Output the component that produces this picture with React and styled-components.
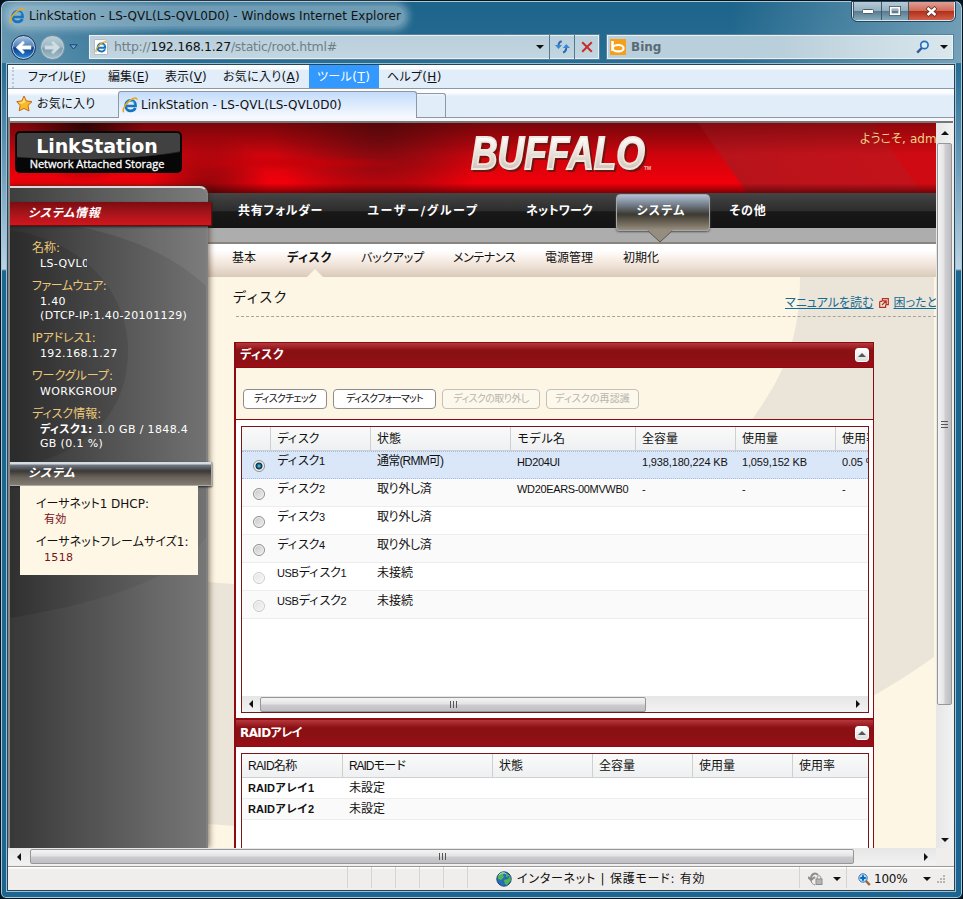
import styled, { createGlobalStyle, css } from "styled-components";

const uiFont = `"DejaVu Sans", "Noto Sans CJK JP", sans-serif`;
const gridFont = `"Liberation Sans", "Noto Sans CJK JP", sans-serif`;

const GlobalStyle = createGlobalStyle`
  * {
    box-sizing: border-box;
  }

  body {
    margin: 0;
    background: #06121e;
    overflow: hidden;
    font-family: ${uiFont};
    font-feature-settings: "palt";
    font-size: 12px;
    line-height: 16px;
    color: #111;
    white-space: nowrap;
  }

  svg {
    display: block;
    flex: none;
  }
`;

const Label = styled.span`
  letter-spacing: ${({ $ls = 0 }) => $ls}px;
`;

/* window frame */

const Window = styled.div`
  width: 963px;
  height: 899px;
  display: flex;
  flex-direction: column;
  padding: 2px 7px 7px 6px;
  border: 1px solid #07131f;
  border-radius: 8px 8px 6px 6px;
  box-shadow: inset 0 0 0 1px #a9c8d8;
  background:
    linear-gradient(
        to right,
        rgba(255, 255, 255, 0.3),
        transparent 18%,
        transparent 76%,
        rgba(255, 255, 255, 0.36)
      )
      0 0 / 100% 62px no-repeat,
    linear-gradient(#1d648a 0, #2a6f95 70px, #6f9fbd 170px, #bdd3e2 268px, #1b678f 270px, #1d6590 100%);
`;

const TitleBar = styled.div`
  display: flex;
  align-items: center;
  height: 29px;
  flex: none;
`;

const TitleText = styled.div`
  display: flex;
  align-items: center;
  gap: 4px;
  height: 20px;
  margin-left: 1px;
  padding: 0 4px 0 1px;
  margin-top: -4px;
  border-radius: 10px;
  background: rgba(190, 212, 224, 0.5);
  box-shadow: 0 0 7px 4px rgba(190, 212, 224, 0.5);
`;

const WindowButtons = styled.div`
  display: flex;
  align-self: flex-start;
  height: 19px;
  margin: -1px 0 0 auto;
  border: 1px solid #dbe7ee;
  border-top: 0;
  border-radius: 0 0 5px 5px;
  overflow: hidden;
  outline: 1px solid #24455c;
`;

const WindowButton = styled.div`
  width: ${({ $w }) => $w}px;
  display: flex;
  align-items: center;
  justify-content: center;
  border-left: 1px solid #3a596b;
  background: ${({ $close }) =>
    $close
      ? "linear-gradient(#e0a093, #cf6b5a 48%, #b22c18 50%, #d0604a)"
      : "linear-gradient(#b7cbd7, #93afbf 48%, #55798e 50%, #86a8b9)"};
`;

const NavBar = styled.div`
  display: flex;
  align-items: center;
  height: 32px;
  flex: none;
  padding: 0 1px 2px 4px;
`;

const RoundButton = styled.div`
  width: 25px;
  height: 25px;
  margin-right: 4px;
  display: flex;
  align-items: center;
  justify-content: center;
  border-radius: 50%;
  border: 1px solid ${({ $active }) => ($active ? "#16345e" : "#7694a3")};
  box-shadow: inset 0 0 0 1px #b9cedb;
  background: ${({ $active }) =>
    $active
      ? "linear-gradient(#a9c5e2, #4f80bd 45%, #0d3c8a 52%, #2a90e0)"
      : "linear-gradient(#bccfd7, #9db7c3 48%, #7c9dac 52%, #a5bfca)"};
`;

const Field = styled.div`
  display: flex;
  align-items: center;
  height: 26px;
  border: 1px solid #56839c;
  box-shadow: inset 0 0 0 1px #e9f1f5;
  background: linear-gradient(#b9cfdb, #c3d6e1);
  ${({ $w }) => css`
    width: ${$w}px;
  `}
`;

const AddressField = styled(Field)`
  margin-left: 10px;
  padding-left: 5px;
  font-size: 12.5px;
  color: #6f7f88;

  b {
    font-weight: normal;
    color: #111;
  }
`;

const FileIcon = styled.div`
  width: 14px;
  height: 16px;
  margin-right: 6px;
  display: flex;
  align-items: center;
  border: 1px solid #b5bdc4;
  border-radius: 1px 4px 1px 1px;
  background: #fff;
`;

const SearchField = styled(Field)`
  margin-left: 6px;
  padding: 0 5px 0 3px;
  gap: 5px;
  color: #596a74;
  font-weight: bold;
  background: linear-gradient(to right, #b9cfdb 50%, #dae7ed);
`;

const FieldButton = styled.div`
  width: 25px;
  height: 24px;
  display: flex;
  align-items: center;
  justify-content: center;
  border-left: 1px solid #56788c;
`;

const Arrow = styled.span`
  width: 0;
  height: 0;
  flex: none;
  border: ${({ $size = 4 }) => $size}px solid transparent;
  ${({ $dir = "down", $size = 4, $color = "#111" }) => {
    const side = { down: "top", up: "bottom", left: "right", right: "left" }[$dir];
    const opposite = { down: "bottom", up: "top", left: "left", right: "right" }[$dir];
    return `border-${side}-color: ${$color}; border-${opposite}-width: 0; border-${side}-width: ${$size}px;`;
  }}
`;

const Push = styled.span`
  flex: 1;
`;

const Client = styled.div`
  flex: 1;
  min-height: 0;
  display: flex;
  flex-direction: column;
  border: 1px solid #24445a;
  outline: 1px solid #9dc0d2;
  background: #f0eeec;
`;

const MenuBar = styled.div`
  display: flex;
  height: 24px;
  flex: none;
  padding-left: 4px;
  border-bottom: 1px solid #8f97a3;
  background: linear-gradient(#fbfdff 0 4px, #e1edf9 5px, #e1edf9);

  &::before {
    content: "";
    width: 6px;
    margin-top: 2px;
    border-left: 2px dotted #c0c8d2;
  }
`;

const MenuItem = styled.div`
  width: ${({ $w }) => $w}px;
  padding-left: 8px;
  line-height: 24px;
  letter-spacing: ${({ $ls = 0 }) => $ls}px;
  color: ${({ $active }) => ($active ? "#fff" : "#111")};
  background: ${({ $active }) => ($active ? "#3399ff" : "none")};
`;

const TabBar = styled.div`
  display: flex;
  align-items: flex-end;
  height: 29px;
  flex: none;
  border-bottom: 1px solid #8f97a3;
  background: linear-gradient(#fbfdff 0 4px, #e1edf9 7px, #e1edf9);
`;

const Favorites = styled.div`
  width: 110px;
  height: 27px;
  display: flex;
  align-items: center;
  gap: 4px;
  padding-left: 8px;
`;

const BrowserTab = styled.div`
  width: 299px;
  height: 27px;
  display: flex;
  align-items: center;
  gap: 3px;
  padding-left: 3px;
  margin-bottom: -1px;
  border: 1px solid #8f97a3;
  border-bottom: 0;
  border-radius: 3px 3px 0 0;
  background: linear-gradient(#c3dcfb, #f7faff);
`;

const NewTab = styled.div`
  width: 29px;
  height: 24px;
  border: 1px solid #8f97a3;
  border-bottom: 0;
  border-left: 0;
  border-radius: 0 3px 0 0;
`;

const Viewport = styled.div`
  display: flex;
  height: 730px;
  flex: none;
  margin: 0 1px 0 0;
  padding-top: 5px;
  border-left: 2px solid #888;
  background: linear-gradient(#f4f8fc 0 3px, #777 3px 5px, #f0f0f0 5px);
`;

const BottomScroll = styled.div`
  width: 928px;
  flex: none;
`;

/* scroll bars */

const Grip = styled.span`
  width: 7px;
  height: 7px;
  background: repeating-linear-gradient(
    ${({ $vertical }) => ($vertical ? "180deg" : "90deg")},
    #555 0 1px,
    transparent 1px 3px
  );
`;

const Scroll = styled.div`
  display: flex;
  flex: none;
  align-items: center;
  background: ${({ $vertical }) =>
    $vertical ? "linear-gradient(90deg, #e6e6e6, #f2f2f2)" : "linear-gradient(#e6e6e6, #f2f2f2)"};
  flex-direction: ${({ $vertical }) => ($vertical ? "column" : "row")};
  ${({ $vertical, $thick }) => ($vertical ? `width: ${$thick}px;` : `height: ${$thick}px;`)}
`;

const ScrollEnd = styled.span`
  display: flex;
  align-items: center;
  justify-content: center;
  width: ${({ $w }) => $w}px;
  height: ${({ $h }) => $h}px;
`;

const Thumb = styled.span`
  display: flex;
  align-items: center;
  justify-content: center;
  border: 1px solid #979797;
  border-radius: 2px;
  ${({ $vertical, $length }) =>
    $vertical
      ? `width: 15px; height: ${$length}px; background: linear-gradient(90deg, #f4f4f4, #e4e4e6 45%, #cfcfd3 55%, #bdbdc2);`
      : `height: 15px; width: ${$length}px; background: linear-gradient(#f4f4f4, #e4e4e6 45%, #cbcbcf 55%, #c0c0c4);`}
`;

/* web page */

const Page = styled.div`
  width: 926px;
  height: 725px;
  flex: none;
  display: flex;
  flex-direction: column;
  overflow: hidden;
`;

const Banner = styled.header`
  height: 70px;
  flex: none;
  display: flex;
  align-items: flex-start;
  padding: 8px 0 0 5px;
  background:
    linear-gradient(rgba(50, 0, 0, 0.4), transparent 45%, transparent 86%, rgba(50, 0, 0, 0.6)),
    radial-gradient(ellipse at 285px 40px, rgba(200, 0, 8, 0.9), transparent 120px),
    radial-gradient(circle at 370px 0, #6d0b10 0, transparent 110px),
    radial-gradient(circle at 75px 0, #300305, transparent 60px),
    radial-gradient(circle at 200px 70px, rgba(110, 8, 12, 0.8), transparent 60px),
    linear-gradient(55deg, transparent 75.5%, #b8131b 75.7%, #c4121a 93.4%, #d00a12 93.6%),
    linear-gradient(#a80910, #f0000a 85%);
`;

const ProductBadge = styled.div`
  width: 167px;
  height: 42px;
  padding-top: 3px;
  border: 2px solid #090909;
  border-radius: 5px;
  text-align: center;
  color: #fff;
  background: radial-gradient(ellipse 150px 27px at 60px 0, #414141 95%, #070707 100%);
`;

const BadgeName = styled.div`
  margin-left: -3px;
  font: bold 19px/21px "DejaVu Sans", sans-serif;
  letter-spacing: -0.1px;
`;

const BadgeNote = styled.div`
  margin-left: -3px;
  font: 11px/13px "Open Sans", "Noto Sans", sans-serif;
  -webkit-text-stroke: 0.3px #fff;
`;

const Welcome = styled.div`
  margin-left: auto;
  width: 76px;
  overflow: hidden;
  color: #f3d389;
  letter-spacing: 0.1px;
`;

const Columns = styled.div`
  display: flex;
  flex: 1;
`;

const Sidebar = styled.aside`
  width: 198px;
  height: 662px;
  margin-top: -7px;
  padding-top: 14px;
  position: relative;
  z-index: 1;
  flex: none;
  border-top: 2px solid #d9d9d9;
  border-right: 2px solid #818181;
  border-radius: 0 8px 0 0;
  color: #fff;
  background: linear-gradient(90deg, #303030, #484848 35%, #727272);
  box-shadow: 1px 0 6px rgba(60, 40, 20, 0.7);
`;

const SidebarArt = styled.svg`
  position: absolute;
  top: 0;
  left: 0;
  z-index: -1;
`;

const SideHeading = styled.h2`
  width: 202px;
  height: 24px;
  margin: 0;
  padding-left: 18px;
  font-size: 12px;
  font-style: italic;
  line-height: 23px;
  color: #fff;
  letter-spacing: ${({ $ls = 0 }) => $ls}px;
  box-shadow: 0 1px 2px #222;
  background: ${({ $dark }) =>
    $dark
      ? "linear-gradient(#d7dce2 0 2px, #717a86 3px, #3b3936 9px, #67615a 15px, #847c70)"
      : "linear-gradient(#7c0c10, #a3141a 45%, #d1161e)"};
  border: ${({ $dark }) => ($dark ? "solid #aaa" : "solid #6b0b0e")};
  border-width: 0 1px 1px 0;
`;

const InfoList = styled.dl`
  height: 236px;
  margin: 0;
  padding: 14px 0 0 22px;
`;

const InfoGroup = styled.div`
  margin-bottom: 7px;

  dt {
    color: ${({ $light }) => ($light ? "#111" : "#ecc878")};
    line-height: 17px;
  }

  dd {
    margin-left: 8px;
    font-size: 11px;
    line-height: 14px;
    letter-spacing: 0.35px;
    color: ${({ $light }) => ($light ? "#7d1118" : "#fff")};
  }
`;

const ClippedValue = styled.div`
  width: 47px;
  overflow: hidden;
`;

const StatusCard = styled.dl`
  width: 178px;
  height: 89px;
  margin: 0 0 0 10px;
  padding: 10px 0 0 16px;
  background: #fef7e6;
`;

const Main = styled.main`
  flex: 1;
  position: relative;
  min-width: 0;
  background: #fef6e5;
  isolation: isolate;
`;

const PageArt = styled.svg`
  position: absolute;
  top: 84px;
  left: 0;
  z-index: -1;
`;

const PrimaryNav = styled.nav`
  display: flex;
  height: 35px;
  padding-left: 10px;
  background: linear-gradient(#454545, #2d2d2d 50%, #181818 54%, #141414);
  color: #fff;
  font-weight: bold;
`;

const PrimaryItem = styled.div`
  width: ${({ $w }) => $w}px;
  line-height: 37px;
  text-align: center;
  letter-spacing: ${({ $ls = 0 }) => $ls}px;
  ${({ $active }) =>
    $active &&
    css`
      position: relative;
      height: 37px;
      margin-top: 1px;
      padding-right: 4px;
      border: 1px solid #a5a8a8;
      border-radius: 4px;
      line-height: 33px;
      background: linear-gradient(#afc0d6, #707984 30%, #3c3a32 55%, #645c50 75%, #978e80);
      box-shadow: 0 1px 2px #555;
    `}
`;

const NavPointer = styled.svg`
  position: absolute;
  left: 30px;
  top: 35px;
  z-index: 1;
`;

const GrayStrip = styled.div`
  height: 16px;
  border-bottom: 2px solid #88847f;
  background: #adadad;
`;

const SubNav = styled.nav`
  display: flex;
  height: 33px;
  padding-left: 24px;
  line-height: 29px;
  background: linear-gradient(#fff 20%, #f5e9df 55%, #d9cbbb);
`;

const SubItem = styled.div`
  width: ${({ $w }) => $w}px;
  letter-spacing: ${({ $ls = 0 }) => $ls}px;
  font-weight: ${({ $active }) => ($active ? "bold" : "normal")};
`;

const SubPointer = styled(Arrow)`
  position: absolute;
  left: 98px;
  top: 76px;
`;

const TitleRow = styled.div`
  display: flex;
  justify-content: space-between;
  width: 700px;
  height: 40px;
  margin-left: 28px;
  border-bottom: 1px dashed #aaa39a;
`;

const PageTitle = styled.h1`
  margin: 11px 0 0 -3px;
  font-size: 14px;
  font-weight: normal;
  line-height: 18px;
  letter-spacing: 1.7px;
`;

const HelpLinks = styled.div`
  display: flex;
  align-items: center;
  gap: 5px;
  width: 151px;
  height: 18px;
  margin-top: 17px;
  overflow: hidden;
  color: #176b93;

  span {
    text-decoration: underline;
  }
`;

const Panels = styled.div`
  width: 640px;
  margin: 25px 0 0 26px;
  border: solid #8d0a10;
  border-width: 0 1px 0 2px;
`;

const PanelHeader = styled.div`
  display: flex;
  align-items: center;
  justify-content: space-between;
  height: ${({ $h }) => $h}px;
  padding: 0 4px;
  border: solid #8d0a10;
  border-width: ${({ $edge = 1 }) => $edge}px 0 1px;
  color: #fff;
  font-weight: bold;
  background: linear-gradient(#b5383d, #8b1014 30%, #8a1014 60%, #980f16);
`;

const CollapseButton = styled.div`
  width: 14px;
  height: 14px;
  display: flex;
  align-items: center;
  justify-content: center;
  border: 1px solid #fff;
  border-radius: 3px;
  background: linear-gradient(#fff, #dcdcdc);
`;

const Toolbar = styled.div`
  display: flex;
  gap: 6px;
  height: 52px;
  padding: 21px 0 0 7px;
  border-bottom: 1px solid #8d0a10;
`;

const ToolButton = styled.button`
  width: ${({ $w }) => $w}px;
  height: 20px;
  padding: 0;
  border: 1px solid #8c8c8c;
  border-radius: 4px;
  background: #fff;
  font: 10px/16px ${uiFont};
  font-feature-settings: "palt";
  letter-spacing: ${({ $ls = 0 }) => $ls}px;
  white-space: nowrap;
  color: #111;

  &:disabled {
    color: #b9b5aa;
    border-color: #c5c1b7;
    background: #fdf8ec;
  }
`;

const PanelBody = styled.div`
  height: ${({ $h }) => $h}px;
  padding: 6px 4px 0 5px;
  background: #fff;
`;

const GridFrame = styled.div`
  height: ${({ $h }) => $h}px;
  display: flex;
  flex-direction: column;
  border: 1px solid #78161a;
  overflow: hidden;
  font: 11px/16px ${gridFont};
`;

const GridRow = styled.div`
  display: grid;
  grid-template-columns: ${({ $cols }) => $cols};
  height: ${({ $h }) => $h}px;
  flex: none;
  border-bottom: 1px solid #ededed;
  background: ${({ $alt }) => ($alt ? "#fafafa" : "#fff")};
  ${({ $selected }) =>
    $selected &&
    css`
      background: #dae7f9;
      border-top: 1px dotted #a3bae9;
      border-bottom: 1px dotted #a3bae9;
    `}
`;

const GridHead = styled(GridRow)`
  background: linear-gradient(#fafafa, #eef0f1);
  border-bottom: 1px solid #d0d0d0;
`;

const HeadCell = styled.div`
  padding-left: 6px;
  border-right: 1px solid #cfcfcf;
  font-size: 12px;
  line-height: 24px;
  letter-spacing: ${({ $ls = 0 }) => $ls}px;
  overflow: hidden;
`;

const Cell = styled.div`
  padding: ${({ $top = 2 }) => $top}px 0 0 6px;
  overflow: hidden;
  letter-spacing: ${({ $ls = 0 }) => $ls}px;
  font-weight: ${({ $bold }) => ($bold ? "bold" : "normal")};
`;

const Jp = styled.span`
  font-size: 12px;
  letter-spacing: ${({ $ls = 0 }) => $ls}px;
`;

const Radio = styled.span`
  width: 12px;
  height: 12px;
  margin: ${({ $checked }) => ($checked ? 8 : 9)}px 0 0 11px;
  border: 1px solid #8e8f8f;
  border-radius: 50%;
  opacity: ${({ $disabled }) => ($disabled ? 0.45 : 1)};
  box-shadow: inset 0 0 0 1px #f4f4f4;
  background: ${({ $checked }) =>
    $checked
      ? "radial-gradient(circle at 50% 50%, #6fd0ee 0, #14617f 2px, #0b2f45 3px, #e8e8e8 4px)"
      : "linear-gradient(135deg, #c5c5c5, #f1f1f1)"};
`;

/* status bar */

const StatusBar = styled.div`
  display: flex;
  flex: 1;
  margin-top: 1px;
  border-top: 1px solid #999;
  background: linear-gradient(#fff 0 1px, #f0eeec 2px);
`;

const StatusSlot = styled.div`
  width: ${({ $w }) => $w}px;
  height: 21px;
  display: flex;
  align-items: center;
  gap: ${({ $gap = 5 }) => $gap}px;
  padding-top: 3px;
  padding-left: ${({ $pad = 0 }) => $pad}px;
  border-right: ${({ $last }) => ($last ? "0" : "1px solid #d6d3d1")};
`;

const IeIcon = ({ size = 16 }) => (
  <svg width={size} height={size} viewBox="0 0 16 16" fill="none">
    <path d="M3.6 9H13.6C13.8 5.6 11.7 3.4 8.7 3.4C5.7 3.4 3.6 5.7 3.6 8.7C3.6 11.8 5.8 13.9 8.7 13.9C10.9 13.9 12.6 12.8 13.3 11" stroke="#1874bd" strokeWidth="2.7" />
    <path d="M4.5 7.5C5 5.5 6.6 4 8.7 4C10.3 4 11.7 5 12.3 6.4" stroke="#5cc4f0" strokeWidth="1.1" />
    <path d="M2 15C-.4 13.6 3.1 7 8.2 3.2C11.5.8 15 .3 15 2.8" stroke="#e9a91c" strokeWidth="1.6" />
  </svg>
);

const StarIcon = () => (
  <svg width="17" height="17" viewBox="0 0 17 17">
    <path d="M8 1L10.4 5.9L16 6.7L12 10.4L13 16L8 13.4L3.2 15.8L4.1 10.5L.8 6.6L5.8 5.9Z" fill="#fbb829" stroke="#c66b12" />
    <path d="M8 3L9.5 7L5 9L2.8 7.2L6.6 6.7Z" fill="#ffe27b" />
  </svg>
);

const ArrowIcon = ({ back }) => (
  <svg width="17" height="15" viewBox="0 0 17 15">
    <path
      d={back ? "M1 7.5L8 1L9.5 3L7 5.8H16V9.2H7L9.5 12L8 14Z" : "M16 7.5L9 1L7.5 3L10 5.8H1V9.2H10L7.5 12L9 14Z"}
      fill={back ? "#fff" : "#d0dde3"}
      stroke={back ? "#dceaf7" : "#c6d5dc"}
      strokeWidth=".5"
    />
  </svg>
);

const RefreshIcon = () => (
  <svg width="15" height="14" viewBox="0 0 15 14" fill="none" stroke="#286bb5" strokeWidth="2">
    <path d="M6.8 1.4C4.3 1.4 3.5 3.3 3.5 6M8 12.4C10.5 12 11.3 9.8 11.3 7" />
    <path d="M0 5H7L3.5 9ZM7.8 8H15L11.3 4Z" fill="#3988d4" stroke="none" />
  </svg>
);

const StopIcon = () => (
  <svg width="12" height="12" viewBox="0 0 12 12">
    <path d="M1.2 1.2L10.8 10.8M10.8 1.2L1.2 10.8" stroke="#c62e29" strokeWidth="2" />
  </svg>
);

const SearchIcon = () => (
  <svg width="14" height="14" viewBox="0 0 14 14" fill="#d9edfa" stroke="#276fbb" strokeWidth="1.7">
    <circle cx="8.4" cy="5" r="3.7" />
    <path d="M5.7 8L1.2 12.6" strokeWidth="2.4" stroke="#315a97" />
  </svg>
);

const BingIcon = () => (
  <svg width="16" height="16" viewBox="0 0 16 16" fill="none">
    <rect width="16" height="16" fill="#f6a01a" />
    <path d="M2.5 2V12" stroke="#fff" strokeWidth="2.6" />
    <ellipse cx="8.2" cy="9.2" rx="5.4" ry="3.2" stroke="#fff" strokeWidth="2.2" />
  </svg>
);

const GlobeIcon = () => (
  <svg width="16" height="16" viewBox="0 0 16 16">
    <circle cx="8" cy="8" r="7.2" fill="#276cb8" stroke="#1b4777" />
    <path d="M2 5C4 1 7 1 9 1L7 4L8 6L5 9L2 8ZM8 9L12 8L14 5L15 9L11 14L9 13ZM10 2L14 5L10 6Z" fill="#52b650" />
    <path d="M3 4C5 2 8 1 10 3" stroke="#c8eaff" fill="none" />
  </svg>
);

const LockIcon = () => (
  <svg width="16" height="14" viewBox="0 0 16 14" fill="none" stroke="#8d8d8d">
    <path d="M10 3C7 0 3 2 3 7M0 5L3 8L7 5" strokeWidth="2" />
    <rect x="8" y="7" width="6" height="5.5" fill="#b5b5b5" />
    <path d="M9.2 7V5.5C9.2 3.2 12.8 3.2 12.8 5.5V7M3 8C3 11 5 12.5 7 13" />
  </svg>
);

const ZoomIcon = () => (
  <svg width="13" height="13" viewBox="0 0 13 13">
    <path d="M7.5 7.5L11.8 12" stroke="#9c6637" strokeWidth="2.5" />
    <circle cx="5" cy="5" r="4.2" fill="#b8e0fa" stroke="#3472b2" />
    <path d="M5 2.2V7.8M2.2 5H7.8" stroke="#1168bb" strokeWidth="2" />
  </svg>
);

const ResizeGrip = () => (
  <svg width="9" height="9" viewBox="0 0 9 9" fill="#b8b4b0">
    <path d="M6 0H8V2H6ZM6 3H8V5H6ZM3 3H5V5H3ZM6 6H8V8H6ZM3 6H5V8H3ZM0 6H2V8H0Z" />
  </svg>
);

const PopupIcon = () => (
  <svg width="10" height="10" viewBox="0 0 10 10" fill="none" stroke="#b92e21" strokeWidth="1.2">
    <path d="M3.4 3V.7H9.3V6.6H7M.7 3.4H3.4M6.6 6.6V9.3H.7V3.4M3 7L7 3M4 2.8H7.2V6" />
  </svg>
);

const Logo = styled.svg`
  margin: 1px 0 0 287px;

  .name {
    font: italic bold 47px "Liberation Sans", sans-serif;
    fill: url(#silver);
    stroke: #efe8e0;
    stroke-width: 1.8px;
    filter: drop-shadow(2px 2px 0 #74130f);
  }

  .mark {
    font: bold 5px "Liberation Sans", sans-serif;
    fill: #f0c0b8;
  }
`;

const BuffaloLogo = () => (
  <Logo width="186" height="44" viewBox="0 0 186 44">
    <defs>
      <linearGradient id="silver" x1="0" y1="0" x2="0" y2="1">
        <stop offset="0.2" stopColor="#fff" />
        <stop offset="0.85" stopColor="#cfc2b5" />
      </linearGradient>
    </defs>
    <text className="name" x="2" y="37" textLength="174" lengthAdjust="spacingAndGlyphs">
      BUFFALO
    </text>
    <text className="mark" x="175" y="38">
      TM
    </text>
  </Logo>
);

const ScrollBar = ({ vertical, thick, start, thumb }) => (
  <Scroll $vertical={vertical} $thick={thick}>
    <ScrollEnd $w={vertical ? thick : start} $h={vertical ? start : thick}>
      <Arrow $dir={vertical ? "up" : "left"} />
    </ScrollEnd>
    <Thumb $vertical={vertical} $length={thumb}>
      <Grip $vertical={vertical} />
    </Thumb>
    <Push />
    <ScrollEnd $w={vertical ? thick : 20} $h={vertical ? 17 : thick}>
      <Arrow $dir={vertical ? "down" : "right"} />
    </ScrollEnd>
  </Scroll>
);

const menuItems = [
  { name: "ファイル", access: "F", width: 80 },
  { name: "編集", access: "E", width: 57 },
  { name: "表示", access: "V", width: 58 },
  { name: "お気に入り", access: "A", width: 94, ls: 0.3 },
  { name: "ツール", access: "T", width: 70, ls: 0.4, active: true },
  { name: "ヘルプ", access: "H", width: 70, ls: 0.3 },
];

const primaryItems = [
  { name: "共有フォルダー", width: 125, ls: 0.8 },
  { name: "ユーザー/グループ", width: 160, ls: 1.7 },
  { name: "ネットワーク", width: 113, ls: 0.2 },
  { name: "システム", width: 94, ls: 1.2, active: true },
  { name: "その他", width: 76, ls: 0.8 },
];

const subItems = [
  { name: "基本", width: 55 },
  { name: "ディスク", width: 74, active: true, ls: 0.7 },
  { name: "バックアップ", width: 92 },
  { name: "メンテナンス", width: 92, ls: -0.4 },
  { name: "電源管理", width: 78 },
  { name: "初期化", width: 60 },
];

const info = [
  { label: "名称:", values: [<ClippedValue key="n">LS-QVL0</ClippedValue>] },
  { label: "ファームウェア:", ls: -0.5, values: ["1.40", "(DTCP-IP:1.40-20101129)"] },
  { label: "IPアドレス1:", ls: -0.1, values: ["192.168.1.27"] },
  { label: "ワークグループ:", values: ["WORKGROUP"] },
  {
    label: "ディスク情報:",
    values: [
      <span key="d">
        <b>ディスク1:</b> 1.0 GB / 1848.4
      </span>,
      "GB (0.1 %)",
    ],
  },
];

const diskCols = "29px 100px 140px 125px 100px 100px 100px";
const diskHeads = [
  { name: "" },
  { name: "ディスク", ls: -1.3 },
  { name: "状態" },
  { name: "モデル名" },
  { name: "全容量" },
  { name: "使用量" },
  { name: "使用率" },
];
const disks = [
  { number: 1, state: "通常(RMM可)", ls: -0.8, cells: ["HD204UI", "1,938,180,224 KB", "1,059,152 KB", "0.05 %"], selected: true },
  { number: 2, state: "取り外し済", ls: -1.3, cells: ["WD20EARS-00MVWB0", "-", "-", "-"] },
  { number: 3, state: "取り外し済", ls: -1.3, cells: [] },
  { number: 4, state: "取り外し済", ls: -1.3, cells: [] },
  { number: 1, usb: true, state: "未接続", cells: [], disabled: true },
  { number: 2, usb: true, state: "未接続", cells: [], disabled: true },
];

const raidCols = "101px 150px 100px 100px 100px 100px";
const raidHeads = [
  { name: "RAID名称", ls: -0.7 },
  { name: "RAIDモード", ls: -1.1 },
  { name: "状態" },
  { name: "全容量" },
  { name: "使用量" },
  { name: "使用率" },
];
const raids = ["RAIDアレイ1", "RAIDアレイ2"];

const BrowserChrome = () => (
  <>
    <TitleBar>
      <TitleText>
        <IeIcon />
        <Label $ls={0.02}>LinkStation - LS-QVL(LS-QVL0D0) - Windows Internet Explorer</Label>
      </TitleText>
      <WindowButtons>
        <WindowButton $w={28}>
          <svg width="12" height="5">
            <rect x=".5" y=".5" width="11" height="4" rx="1" fill="#fff" stroke="#485f6c" />
          </svg>
        </WindowButton>
        <WindowButton $w={27}>
          <svg width="12" height="10" fill="none">
            <rect x="1.5" y="1.5" width="9" height="7" stroke="#4b6270" strokeWidth="3" />
            <rect x="1.8" y="1.8" width="8.4" height="6.4" stroke="#fff" strokeWidth="1.8" />
          </svg>
        </WindowButton>
        <WindowButton $w={46} $close>
          <svg width="13" height="11" viewBox="0 0 13 11">
            <path d="M2 1.5L11 9.5M11 1.5L2 9.5" stroke="#5e2d28" strokeWidth="4" />
            <path d="M2.5 2L10.5 9M10.5 2L2.5 9" stroke="#fff" strokeWidth="2.4" />
          </svg>
        </WindowButton>
      </WindowButtons>
    </TitleBar>
    <NavBar>
      <RoundButton $active>
        <ArrowIcon back />
      </RoundButton>
      <RoundButton>
        <ArrowIcon />
      </RoundButton>
      <svg width="9" height="6" viewBox="0 0 9 6">
        <path d="M.8.8H8.2L4.5 5Z" fill="#6fa9d3" stroke="#134371" />
      </svg>
      <AddressField $w={512}>
        <FileIcon>
          <IeIcon size={12} />
        </FileIcon>
        <Label $ls={-0.26}>
          http://<b>192.168.1.27</b>/static/root.html#
        </Label>
        <Push />
        <Arrow />
        <FieldButton style={{ marginLeft: 5 }}>
          <RefreshIcon />
        </FieldButton>
        <FieldButton>
          <StopIcon />
        </FieldButton>
      </AddressField>
      <SearchField $w={348}>
        <BingIcon />
        Bing
        <Push />
        <SearchIcon />
        <span />
        <Arrow />
      </SearchField>
    </NavBar>
  </>
);

const SideInfo = () => (
  <Sidebar>
    <SidebarArt width="196" height="660" viewBox="0 0 196 660">
      <path d="M0 0H196V98C150 55 80 35 0 30Z" fill="#fff" opacity=".07" />
      <path d="M0 42C70 52 116 100 118 160C119 230 70 270 0 280Z" fill="#000" opacity=".1" />
      <path d="M196 348C180 380 120 410 0 430V660H196Z" fill="#fff" opacity=".04" />
    </SidebarArt>
    <SideHeading $ls={0.7}>システム情報</SideHeading>
    <InfoList>
      {info.map(({ label, ls, values }) => (
        <InfoGroup key={label}>
          <dt>
            <Label $ls={ls}>{label}</Label>
          </dt>
          {values.map((value, index) => (
            <dd key={index}>{value}</dd>
          ))}
        </InfoGroup>
      ))}
    </InfoList>
    <SideHeading $dark $ls={0.8}>
      システム
    </SideHeading>
    <StatusCard>
      <InfoGroup $light>
        <dt>イーサネット1 DHCP:</dt>
        <dd>有効</dd>
      </InfoGroup>
      <InfoGroup $light>
        <dt>
          <Label $ls={0.1}>イーサネットフレームサイズ1:</Label>
        </dt>
        <dd>1518</dd>
      </InfoGroup>
    </StatusCard>
  </Sidebar>
);

const DiskPanel = () => (
  <>
    <PanelHeader $h={26}>
      <Label $ls={0.5}>ディスク</Label>
      <CollapseButton>
        <Arrow $dir="up" $color="#555" />
      </CollapseButton>
    </PanelHeader>
    <Toolbar>
      <ToolButton $w={84} $ls={-0.8}>
        ディスクチェック
      </ToolButton>
      <ToolButton $w={103} $ls={-0.8}>
        ディスクフォーマット
      </ToolButton>
      <ToolButton $w={98} $ls={-0.6} disabled>
        ディスクの取り外し
      </ToolButton>
      <ToolButton $w={93} $ls={0.1} disabled>
        ディスクの再認識
      </ToolButton>
    </Toolbar>
    <PanelBody $h={298}>
      <GridFrame $h={287}>
        <GridHead $cols={diskCols} $h={24}>
          {diskHeads.map(({ name, ls }) => (
            <HeadCell key={name} $ls={ls}>
              {name}
            </HeadCell>
          ))}
        </GridHead>
        {disks.map(({ number, usb, state, ls, cells, selected, disabled }, index) => (
          <GridRow key={index} $cols={diskCols} $h={28} $selected={selected} $alt={index % 2 === 1}>
            <Radio $checked={selected} $disabled={disabled} />
            <Cell $top={selected ? 1 : 2}>
              {usb && <Label $ls={-0.4}>USB</Label>}
              <Jp $ls={-1.3}>ディスク</Jp>
              {number}
            </Cell>
            <Cell $top={selected ? 1 : 2}>
              <Jp $ls={ls}>{state}</Jp>
            </Cell>
            {cells.map((cell, i) => (
              <Cell key={i} $ls={i === 0 ? -0.35 : -0.15}>
                {cell}
              </Cell>
            ))}
          </GridRow>
        ))}
        <Push />
        <ScrollBar thick={16} start={18} thumb={386} />
      </GridFrame>
    </PanelBody>
  </>
);

const RaidPanel = () => (
  <>
    <PanelHeader $h={29} $edge={2}>
      <Label $ls={-0.6}>RAIDアレイ</Label>
      <CollapseButton>
        <Arrow $dir="up" $color="#555" />
      </CollapseButton>
    </PanelHeader>
    <PanelBody $h={110}>
      <GridFrame $h={110}>
        <GridHead $cols={raidCols} $h={24}>
          {raidHeads.map(({ name, ls }) => (
            <HeadCell key={name} $ls={ls}>
              {name}
            </HeadCell>
          ))}
        </GridHead>
        {raids.map((name, index) => (
          <GridRow key={name} $cols={raidCols} $h={21} $alt={index % 2 === 1}>
            <Cell $bold>{name}</Cell>
            <Cell>
              <Jp>未設定</Jp>
            </Cell>
          </GridRow>
        ))}
      </GridFrame>
    </PanelBody>
  </>
);

const App = () => {
  return (
    <Window>
      <GlobalStyle />
      <BrowserChrome />
      <Client>
        <MenuBar>
          {menuItems.map(({ name, access, width, ls, active }) => (
            <MenuItem key={name} $w={width} $ls={ls} $active={active}>
              {name}(<u>{access}</u>)
            </MenuItem>
          ))}
        </MenuBar>
        <TabBar>
          <Favorites>
            <StarIcon />
            <Label $ls={0.3}>お気に入り</Label>
          </Favorites>
          <BrowserTab>
            <IeIcon />
            <Label $ls={0.03}>LinkStation - LS-QVL(LS-QVL0D0)</Label>
          </BrowserTab>
          <NewTab />
        </TabBar>
        <Viewport>
          <Page>
            <Banner>
              <ProductBadge>
                <BadgeName>LinkStation</BadgeName>
                <BadgeNote>Network Attached Storage</BadgeNote>
              </ProductBadge>
              <BuffaloLogo />
              <Welcome>ようこそ, admin</Welcome>
            </Banner>
            <Columns>
              <SideInfo />
              <Main>
                <PageArt width="728" height="571" viewBox="208 277 728 571">
                  <path d="M800 277C800 345 780 380 753 418C640 590 350 594 208 582V824C450 845 750 790 934 657V277Z" fill="#ebe5d9" />
                </PageArt>
                <PrimaryNav>
                  {primaryItems.map(({ name, width, ls, active }) => (
                    <PrimaryItem key={name} $w={width} $ls={ls} $active={active}>
                      {name}
                      {active && (
                        <NavPointer width="26" height="13">
                          <path d="M0 0H26L13 12Z" fill="#958d80" />
                          <path d="M1 1L13 12L25 1" fill="none" stroke="#5d5850" />
                        </NavPointer>
                      )}
                    </PrimaryItem>
                  ))}
                </PrimaryNav>
                <GrayStrip />
                <SubNav>
                  {subItems.map(({ name, width, ls, active }) => (
                    <SubItem key={name} $w={width} $ls={ls} $active={active}>
                      {name}
                    </SubItem>
                  ))}
                  <SubPointer $dir="up" $size={9} $color="#fef6e5" />
                </SubNav>
                <TitleRow>
                  <PageTitle>ディスク</PageTitle>
                  <HelpLinks>
                    <span>マニュアルを読む</span>
                    <PopupIcon />
                    <span>困ったときには</span>
                  </HelpLinks>
                </TitleRow>
                <Panels>
                  <DiskPanel />
                  <RaidPanel />
                </Panels>
              </Main>
            </Columns>
          </Page>
          <ScrollBar vertical thick={17} start={20} thumb={562} />
        </Viewport>
        <BottomScroll>
          <ScrollBar thick={17} start={22} thumb={824} />
        </BottomScroll>
        <StatusBar>
          <StatusSlot $w={340} />
          {[1, 2, 3, 4, 5].map((slot) => (
            <StatusSlot key={slot} $w={24} />
          ))}
          <StatusSlot $w={24} $last />
          <StatusSlot $w={308} $pad={4}>
            <GlobeIcon />
            <Label $ls={0.75}>インターネット | 保護モード: 有効</Label>
          </StatusSlot>
          <StatusSlot $w={47} $pad={8} $gap={9}>
            <LockIcon />
            <Arrow />
          </StatusSlot>
          <StatusSlot $w={99} $pad={11} $gap={3} $last>
            <ZoomIcon />
            <Label $ls={-0.2}>100%</Label>
            <span style={{ width: 11 }} />
            <Arrow />
            <Push />
            <ResizeGrip />
          </StatusSlot>
        </StatusBar>
      </Client>
    </Window>
  );
};

export default App;
